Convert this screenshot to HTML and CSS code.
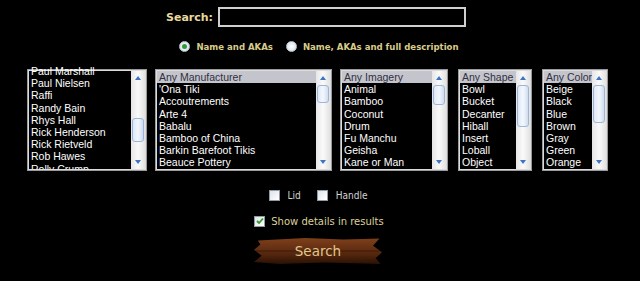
FILE: index.html
```html
<!DOCTYPE html>
<html lang="en">
<head>
  <meta charset="UTF-8">
  <title>Mug Search</title>
  <link rel="stylesheet" href="styles.css">
</head>
<body>
  <div class="search-form">
    <div class="search-row">
      <label class="search-label" for="q">Search:</label>
      <input type="text" class="search-input" id="q">
    </div>

    <div class="radio-row">
      <span class="radio checked"></span><span class="radio-label">Name and AKAs</span>
      <span class="radio"></span><span class="radio-label">Name, AKAs and full description</span>
    </div>

    <div class="lists">
      <div class="listbox artists">
        <div class="items scrolled">
          <div class="item">Paul Marshall</div>
          <div class="item">Paul Nielsen</div>
          <div class="item">Raffi</div>
          <div class="item">Randy Bain</div>
          <div class="item">Rhys Hall</div>
          <div class="item">Rick Henderson</div>
          <div class="item">Rick Rietveld</div>
          <div class="item">Rob Hawes</div>
          <div class="item">Rolly Crump</div>
        </div>
        <div class="scrollbar">
          <div class="arrow up"></div>
          <div class="track"><div class="thumb" style="top: 33px; height: 24px"></div></div>
          <div class="arrow down"></div>
        </div>
      </div>

      <div class="listbox makers">
        <div class="items">
          <div class="item selected">Any Manufacturer</div>
          <div class="item">'Ona Tiki</div>
          <div class="item">Accoutrements</div>
          <div class="item">Arte 4</div>
          <div class="item">Babalu</div>
          <div class="item">Bamboo of China</div>
          <div class="item">Barkin Barefoot Tikis</div>
          <div class="item">Beauce Pottery</div>
        </div>
        <div class="scrollbar">
          <div class="arrow up"></div>
          <div class="track"><div class="thumb" style="top: 0; height: 18px"></div></div>
          <div class="arrow down"></div>
        </div>
      </div>

      <div class="listbox imagery">
        <div class="items">
          <div class="item selected">Any Imagery</div>
          <div class="item">Animal</div>
          <div class="item">Bamboo</div>
          <div class="item">Coconut</div>
          <div class="item">Drum</div>
          <div class="item">Fu Manchu</div>
          <div class="item">Geisha</div>
          <div class="item">Kane or Man</div>
        </div>
        <div class="scrollbar">
          <div class="arrow up"></div>
          <div class="track"><div class="thumb" style="top: 0; height: 20px"></div></div>
          <div class="arrow down"></div>
        </div>
      </div>

      <div class="listbox shapes">
        <div class="items">
          <div class="item selected">Any Shape</div>
          <div class="item">Bowl</div>
          <div class="item">Bucket</div>
          <div class="item">Decanter</div>
          <div class="item">Hiball</div>
          <div class="item">Insert</div>
          <div class="item">Loball</div>
          <div class="item">Object</div>
        </div>
        <div class="scrollbar">
          <div class="arrow up"></div>
          <div class="track"><div class="thumb" style="top: 0; height: 42px"></div></div>
          <div class="arrow down"></div>
        </div>
      </div>

      <div class="listbox colors">
        <div class="items">
          <div class="item selected">Any Color</div>
          <div class="item">Beige</div>
          <div class="item">Black</div>
          <div class="item">Blue</div>
          <div class="item">Brown</div>
          <div class="item">Gray</div>
          <div class="item">Green</div>
          <div class="item">Orange</div>
        </div>
        <div class="scrollbar">
          <div class="arrow up"></div>
          <div class="track"><div class="thumb" style="top: 0; height: 38px"></div></div>
          <div class="arrow down"></div>
        </div>
      </div>
    </div>

    <div class="check-row">
      <span class="checkbox"></span><span class="check-label">Lid</span>
      <span class="checkbox"></span><span class="check-label">Handle</span>
    </div>

    <div class="details-row">
      <span class="checkbox checked">
        <svg width="8" height="8" viewBox="0 0 8 8"><path d="M1 4 L3 6 L7 1.5" fill="none" stroke="#2f9a2a" stroke-width="1.8"/></svg>
      </span>
      <span class="details-label">Show details in results</span>
    </div>

    <div class="button-row">
      <button class="plank">Search</button>
    </div>
  </div>
</body>
</html>
```

FILE: styles.css
```css
body {
  margin: 0;
  background: #000;
  font-family: "DejaVu Sans", Verdana, sans-serif;
}

.search-form {
  width: 634px;
  display: flex;
  flex-direction: column;
  align-items: center;
}

.search-row {
  margin-top: 7px;
  height: 20px;
  display: flex;
  align-items: center;
  gap: 5px;
  padding-right: 2px;
}

.search-label {
  color: #e8d89c;
  font-size: 11px;
  font-weight: bold;
}

.search-input {
  box-sizing: border-box;
  width: 248px;
  height: 20px;
  background: #000;
  border: 2px solid #cfcfcf;
  color: #fff;
  padding: 0 3px;
}

.radio-row {
  margin-top: 12px;
  height: 14px;
  display: flex;
  align-items: center;
  padding-left: 4px;
}

.radio {
  box-sizing: border-box;
  width: 11px;
  height: 11px;
  border-radius: 50%;
  background: radial-gradient(circle, #fff 0, #dfe6ee 70%);
  border: 1px solid #b9c4cf;
  position: relative;
}

.radio.checked::after {
  content: "";
  position: absolute;
  left: 2px;
  top: 2px;
  width: 5px;
  height: 5px;
  border-radius: 50%;
  background: #2e9a3a;
}

.radio-label {
  color: #d9cc8a;
  font-family: "DejaVu Sans Condensed", "DejaVu Sans", sans-serif;
  font-size: 9.5px;
  font-weight: bold;
  margin: 0 13px 0 6px;
}

.radio-label:last-child {
  margin-right: 0;
}

.lists {
  align-self: flex-start;
  margin: 16px 0 0 27px;
  display: flex;
}

.listbox {
  box-sizing: border-box;
  height: 102px;
  display: flex;
  border: 1px solid #9a9a9a;
  box-shadow: inset 0 0 0 1px #dcdcdc;
  padding: 1px;
  background: #000;
}

.artists { width: 120px; }
.makers { width: 177px; margin-left: 8px; }
.imagery { width: 108px; margin-left: 8px; }
.shapes { width: 74px; margin-left: 10px; }
.colors { width: 66px; margin-left: 10px; }

.items {
  flex: 1;
  overflow: hidden;
  font-family: "Liberation Sans", Arial, sans-serif;
  font-size: 10.5px;
  color: #fff;
}

.items.scrolled {
  margin-top: -6px;
}

.item {
  height: 12.2px;
  line-height: 12.6px;
  padding-left: 2px;
  white-space: nowrap;
}

.item.selected {
  background: #c4c4cc;
  color: #303040;
}

.scrollbar {
  width: 14px;
  display: flex;
  flex-direction: column;
  background: linear-gradient(90deg, #e6e6e6, #fafafa 50%, #e2e2e2);
}

.arrow {
  height: 14px;
  display: flex;
  justify-content: center;
  align-items: center;
}

.arrow::before {
  content: "";
  border-left: 3px solid transparent;
  border-right: 3px solid transparent;
}

.arrow.up::before {
  border-bottom: 4px solid #3c74c4;
}

.arrow.down::before {
  border-top: 4px solid #3c74c4;
}

.track {
  flex: 1;
  position: relative;
}

.thumb {
  position: absolute;
  left: 1px;
  right: 1px;
  box-sizing: border-box;
  border: 1px solid #9cb6da;
  border-radius: 3px;
  background: linear-gradient(90deg, #dde8f6, #f4f8fd 50%, #cfdcee);
}

.check-row {
  margin-top: 17px;
  height: 14px;
  display: flex;
  align-items: center;
  padding-left: 2px;
}

.checkbox {
  box-sizing: border-box;
  width: 11px;
  height: 11px;
  border: 1px solid #8e9aa6;
  background: linear-gradient(135deg, #dfe3e8, #fff);
  display: inline-flex;
  align-items: center;
  justify-content: center;
}

.check-label {
  color: #d4d4d4;
  font-family: "DejaVu Sans Condensed", "DejaVu Sans", sans-serif;
  font-size: 10px;
  margin: 0 16px 0 8px;
}

.check-label:last-child {
  margin-right: 0;
}

.details-row {
  margin-top: 12px;
  height: 14px;
  display: flex;
  align-items: center;
  padding-left: 4px;
}

.details-label {
  color: #ddd09a;
  font-size: 10px;
  margin-left: 6px;
}

.button-row {
  margin-top: 10px;
  padding-left: 2px;
}

.plank {
  width: 128px;
  height: 26px;
  border: none;
  padding: 0;
  color: #e0c78c;
  font-family: "DejaVu Sans", Verdana, sans-serif;
  font-size: 13.5px;
  background:
    linear-gradient(180deg, rgba(0,0,0,0) 0, rgba(0,0,0,0) 46%, rgba(40,15,0,0.6) 50%, rgba(0,0,0,0) 54%),
    linear-gradient(180deg, #7e4019 0, #6c3416 30%, #52250d 65%, #2a1105 100%);
  clip-path: polygon(3% 10%, 40% 0, 70% 6%, 98% 2%, 93% 30%, 100% 55%, 95% 78%, 99% 100%, 55% 94%, 20% 100%, 0 92%, 6% 68%, 0 45%, 5% 25%);
}
```
